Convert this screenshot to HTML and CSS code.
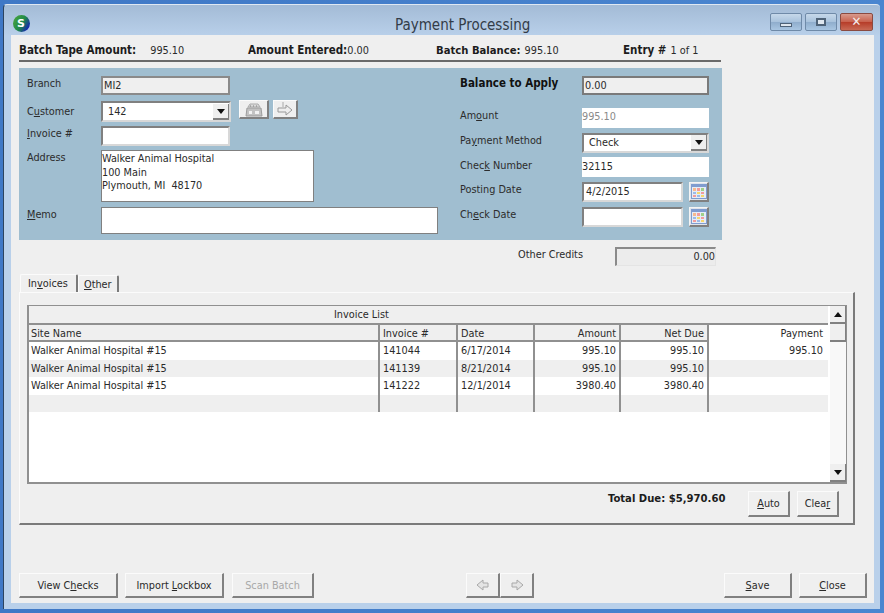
FILE: index.html
```html
<!DOCTYPE html>
<html lang="en">
<head>
<meta charset="utf-8">
<title>Payment Processing</title>
<link rel="stylesheet" href="styles.css">
</head>
<body>
<div class="window">
  <header class="titlebar">
    <svg class="logo" width="17" height="17" viewBox="0 0 17 17">
      <defs><linearGradient id="lg" x1="0" y1="0" x2="1" y2="0.6"><stop offset="0" stop-color="#4fa83c"/><stop offset=".6" stop-color="#1f8a4a"/><stop offset="1" stop-color="#1626b0"/></linearGradient></defs>
      <circle cx="8.5" cy="8.5" r="8.5" fill="url(#lg)"/>
      <text x="8" y="12" text-anchor="middle" class="logo-s">S</text>
    </svg>
    <div class="title">Payment Processing</div>
    <div class="winbtns">
      <div class="winbtn"><span class="min-glyph"></span></div>
      <div class="winbtn"><span class="max-glyph"></span></div>
      <div class="winbtn close"><span class="close-glyph">✕</span></div>
    </div>
  </header>
  <main class="client">
    <div class="infobar">
      <div class="info i1"><b>Batch Tape Amount:</b><span class="v1">995.10</span></div>
      <div class="info i2"><b>Amount Entered:</b><span>0.00</span></div>
      <div class="info i3"><b class="b3">Batch Balance:</b><span class="v3">995.10</span></div>
      <div class="info i4"><b>Entry #</b><span class="v3">1 of 1</span></div>
    </div>
    <section class="panel">
      <div class="col-left">
        <label class="lbl">Branch</label>
        <div class="inset ro w129">MI2</div>
        <label class="lbl nudge3">C<u>u</u>stomer</label>
        <div class="cust-row">
          <div class="inset sel w130"><span class="seltext">142</span><span class="drop"></span></div>
          <button class="btn ico ico1">
            <svg width="20" height="15" viewBox="0 0 20 15"><path d="M3 6h14l1 8H2z" fill="#c2c2c2" stroke="#9c9c9c"/><path d="M4 5l2-3h8l2 3z" fill="#dcdcdc" stroke="#aaa"/><path d="M6 4h1M9 4h1M12 4h1" stroke="#808080"/><path d="M5 9h3v3H5zM11 9h4v3h-4z" fill="#f2f2f2"/></svg>
          </button>
          <button class="btn ico ico2">
            <svg width="18" height="15" viewBox="0 0 18 15"><path d="M2 6h8V3l6 5-6 5v-3H2z" fill="#eee" stroke="#999"/><path d="M7 0v5" stroke="#aaa"/></svg>
          </button>
        </div>
        <label class="lbl"><u>I</u>nvoice #</label>
        <div class="inset w129"></div>
        <label class="lbl">Address</label>
        <div class="inset addr">Walker Animal Hospital<br>100 Main<br>Plymouth, MI&nbsp; 48170</div>
        <label class="lbl"><u>M</u>emo</label>
        <div class="inset memo"></div>
      </div>
      <div class="col-right">
        <label class="lbl strong">Balance to Apply</label>
        <div class="inset ro dark">0.00</div>
        <label class="lbl">Am<u>o</u>unt</label>
        <div class="flat muted">995.10</div>
        <label class="lbl">Pa<u>y</u>ment Method</label>
        <div class="inset sel"><span class="seltext">Check</span><span class="drop"></span></div>
        <label class="lbl nudge1">Chec<u>k</u> Number</label>
        <div class="flat nudge1">32115</div>
        <label class="lbl">Posting Date</label>
        <div class="date-row"><div class="inset date">4/2/2015</div><button class="calbtn"><svg width="16" height="15" viewBox="0 0 16 15"><rect width="16" height="15" fill="#7f9ccf"/><rect x="1" y="3" width="14" height="11" fill="#e6ecf6"/><rect x="2" y="4" width="3" height="3" fill="#f6b98e"/><rect x="6" y="4" width="3" height="3" fill="#f29c9c"/><rect x="10" y="4" width="3" height="3" fill="#9fd08a"/><rect x="2" y="8" width="3" height="2" fill="#9cbbe8"/><rect x="6" y="8" width="3" height="2" fill="#f5d76e"/><rect x="10" y="8" width="3" height="2" fill="#f29c9c"/><rect x="2" y="11" width="3" height="2" fill="#f29c9c"/><rect x="6" y="11" width="3" height="2" fill="#9cbbe8"/><rect x="10" y="11" width="3" height="2" fill="#f5d76e"/></svg></button></div>
        <label class="lbl">Ch<u>e</u>ck Date</label>
        <div class="date-row"><div class="inset date"></div><button class="calbtn"><svg width="16" height="15" viewBox="0 0 16 15"><rect width="16" height="15" fill="#7f9ccf"/><rect x="1" y="3" width="14" height="11" fill="#e6ecf6"/><rect x="2" y="4" width="3" height="3" fill="#f6b98e"/><rect x="6" y="4" width="3" height="3" fill="#f29c9c"/><rect x="10" y="4" width="3" height="3" fill="#9fd08a"/><rect x="2" y="8" width="3" height="2" fill="#9cbbe8"/><rect x="6" y="8" width="3" height="2" fill="#f5d76e"/><rect x="10" y="8" width="3" height="2" fill="#f29c9c"/><rect x="2" y="11" width="3" height="2" fill="#f29c9c"/><rect x="6" y="11" width="3" height="2" fill="#9cbbe8"/><rect x="10" y="11" width="3" height="2" fill="#f5d76e"/></svg></button></div>
      </div>
    </section>
    <div class="credits">
      <span class="credits-label">Other Credits</span>
      <div class="credits-box">0.00</div>
    </div>
    <div class="tabs">
      <div class="tab active">In<u>v</u>oices</div>
      <div class="tab"><u>O</u>ther</div>
    </div>
    <section class="tabpanel">
      <div class="grid">
        <div class="grid-main">
          <div class="grid-title">Invoice List</div>
          <div class="gr head">
            <div>Site Name</div><div>Invoice #</div><div>Date</div><div class="r">Amount</div><div class="r">Net Due</div><div class="r payhead">Payment</div>
          </div>
          <div class="gr">
            <div>Walker Animal Hospital #15</div><div>141044</div><div>6/17/2014</div><div class="r">995.10</div><div class="r">995.10</div><div class="r">995.10</div>
          </div>
          <div class="gr alt">
            <div>Walker Animal Hospital #15</div><div>141139</div><div>8/21/2014</div><div class="r">995.10</div><div class="r">995.10</div><div class="r"></div>
          </div>
          <div class="gr">
            <div>Walker Animal Hospital #15</div><div>141222</div><div>12/1/2014</div><div class="r">3980.40</div><div class="r">3980.40</div><div class="r"></div>
          </div>
          <div class="gr alt">
            <div></div><div></div><div></div><div></div><div></div><div></div>
          </div>
        </div>
        <div class="scroll">
          <div class="sb-btn"><span class="tri up"></span></div>
          <div class="sb-thumb"></div>
          <div class="sb-track"></div>
          <div class="sb-btn"><span class="drop-tri"></span></div>
        </div>
      </div>
      <div class="totals">
        <b class="total">Total Due: $5,970.60</b>
        <button class="btn small"><u>A</u>uto</button>
        <button class="btn small">Clea<u>r</u></button>
      </div>
    </section>
    <footer class="footer">
      <button class="btn b99">View C<u>h</u>ecks</button>
      <button class="btn b99">Import <u>L</u>ockbox</button>
      <button class="btn b82 disabled">Scan Batch</button>
      <div class="nav">
        <button class="btn navb"><svg width="14" height="12" viewBox="0 0 14 12"><path d="M12 4H7V1L1 6l6 5V8h5z" fill="#e4e4e4" stroke="#a8a8a8"/></svg></button>
        <button class="btn navb"><svg width="14" height="12" viewBox="0 0 14 12"><path d="M2 4h5V1l6 5-6 5V8H2z" fill="#e4e4e4" stroke="#a8a8a8"/></svg></button>
      </div>
      <button class="btn b68"><u>S</u>ave</button>
      <button class="btn b68 last"><u>C</u>lose</button>
    </footer>
  </main>
</div>
</body>
</html>
```
FILE: styles.css
```css
* { box-sizing: border-box; }
html, body { margin: 0; height: 100%; }
body {
  width: 884px; height: 613px; overflow: hidden;
  background: linear-gradient(90deg, #3f78c6 0, #4a86d0 100%);
  font-family: "DejaVu Sans", sans-serif;
  font-stretch: condensed;
  font-size: 10.8px;
  color: #2a2a2a;
  padding: 4px 4px 4px 3px;
}
u { text-decoration-thickness: 1px; text-underline-offset: 1px; }
button { font: inherit; color: inherit; padding: 0; }

.window {
  height: 605px;
  display: flex; flex-direction: column;
  border-left: 1px solid #2d4460;
  border-top: 1px solid #dfe8f2;
  border-radius: 4px 4px 0 0;
  background: linear-gradient(180deg, #a3bbd6 0, #b9d0ea 31px, #b9d0ea 100%);
}
.titlebar { height: 30px; display: flex; align-items: flex-start; padding: 10px 7px 0 9px; flex: none; }
.logo { flex: none; }
.logo-s { font: bold 11px "DejaVu Sans", sans-serif; fill: #fff; }
.title { margin-left: 365px; font-size: 15px; line-height: 20px; color: #333c48; white-space: nowrap; font-stretch: condensed; }
.winbtns { margin-left: auto; margin-top: -2px; display: flex; gap: 3px; }
.winbtn {
  width: 32px; height: 18px; border: 1px solid #6f8aa8; border-radius: 2px;
  background: linear-gradient(180deg, #c6d8ea 0, #a8c2dc 50%, #8fadcc 51%, #a9c6e2 100%);
  display: flex; align-items: center; justify-content: center;
}
.winbtn.close { width: 33px; background: linear-gradient(180deg, #d89a8c 0, #c8604c 50%, #b63c28 51%, #c86a55 100%); border-color: #8a4a40; }
.min-glyph { width: 12px; height: 4px; margin-top: 5px; background: #dfe7ef; border: 1px solid #4f6378; }
.max-glyph { width: 10px; height: 8px; background: #dfe7ef; border: 2px solid #4f6378; }
.close-glyph { color: #f4efee; font-size: 13px; font-weight: bold; line-height: 14px; }

.client {
  flex: 1; margin: 0 6px 6px 7px;
  background: #efefef;
  display: flex; flex-direction: column;
  padding: 8px 7px 5px 8px;
}

.infobar {
  width: 702px; height: 19px; flex: none;
  border-bottom: 2px solid #6a6a6a;
  display: flex; line-height: 15px;
}
.infobar b { color: #1c1c1c; font-weight: bold; font-size: 11.5px; }
.infobar .b3 { font-size: 11.2px; }
.info { white-space: nowrap; }
.i1 { width: 229px; }
.i2 { width: 188px; }
.i3 { width: 187px; }
.v1 { margin-left: 14px; }
.v3 { margin-left: 4px; }

.panel {
  margin-top: 6px; width: 703px; height: 172px; flex: none;
  background: #a0bed0;
  display: flex;
  padding: 8px 0 0 8px;
}
.col-left {
  width: 433px; display: grid;
  grid-template-columns: 74px 1fr;
  grid-template-rows: 25px 25px 24px 57px 27px;
  align-items: start;
}
.col-right {
  display: grid;
  grid-template-columns: 122px 127px;
  grid-template-rows: 32px 25px 24px 25px 25px 20px;
  align-items: start;
}
.lbl { line-height: 15px; color: #2c2c2c; display: block; }
.nudge3 { padding-top: 3px; }
.nudge1 { padding-top: 1px; }
.strong { font-weight: bold; color: #111; font-size: 11.5px; }

.inset {
  height: 20px; background: #fff;
  border: 2px solid; border-color: #808080 #d8d8d8 #d8d8d8 #808080;
  line-height: 16px; padding-left: 1px; white-space: nowrap;
}
.ro { background: #efefef; border-color: #8a8a8a; height: 19px; }
.dark { border-color: #7a7a7a; }
.w129 { width: 129px; }
.w130 { width: 130px; }
.sel { display: flex; align-items: center; justify-content: space-between; padding-right: 0; }
.seltext { padding-left: 4px; }
.drop {
  width: 16px; height: 16px; flex: none; background: #efefef;
  border-right: 1px solid #808080; border-bottom: 2px solid #808080;
  position: relative;
}
.drop::after {
  content: ""; position: absolute; left: 4px; top: 5px;
  border: 4px solid transparent; border-top: 5px solid #111; border-bottom: 0;
}
.cust-row { display: flex; align-items: flex-start; }
.cust-row .inset { height: 21px; }
.ico { margin-left: 8px; width: 30px; height: 19px; display: flex; align-items: center; justify-content: center; margin-top: -1px; }
.ico2 { margin-left: 4px; width: 25px; }
.addr { width: 213px; height: 52px; border-width: 1px; border-color: #808080; line-height: 13.5px; padding: 1px 0 0 0; }
.memo { width: 337px; height: 27px; border-width: 1px; border-color: #808080; }
.flat { height: 20px; background: #fff; line-height: 17px; white-space: nowrap; }
.flat.nudge1 { padding-top: 1px; }
.muted { color: #8a8a8a; }
.date-row { display: flex; gap: 6px; }
.date { width: 101px; padding-left: 2px; }
.calbtn {
  width: 20px; height: 20px; background: #dfe4ec;
  border: 1px solid; border-color: #f4f4f4 #808080 #808080 #f4f4f4;
  border-width: 1px 2px 2px 1px; display: flex; align-items: center; justify-content: center;
}

.credits { margin-top: 7px; height: 20px; flex: none; display: flex; width: 697px; justify-content: flex-end; }
.credits-label { margin-right: 32px; line-height: 15px; }
.credits-box {
  width: 101px; height: 19px; background: #ececec;
  border: 1px solid; border-color: #8a8a8a #e4e4e4 #e4e4e4 #8a8a8a;
  border-left-width: 2px; border-top-width: 2px;
  text-align: right; line-height: 16px; padding-right: 0;
}

.tabs { margin-top: 7px; height: 18px; flex: none; display: flex; align-items: flex-end; padding-left: 1px; }
.tab {
  height: 17px; padding: 0 5px 0 5px; line-height: 17px;
  border-top: 1px solid #fbfbfb; border-left: 1px solid #fbfbfb;
  border-right: 2px solid #7a7a7a; border-radius: 2px 2px 0 0;
}
.tab.active { height: 18px; width: 58px; padding-left: 7px; background: #efefef; line-height: 18px; }

.tabpanel {
  width: 836px; height: 233px; flex: none;
  border-top: 1px solid #fbfbfb; border-left: 1px solid #fbfbfb;
  border-right: 2px solid #7a7a7a; border-bottom: 2px solid #7a7a7a;
  padding: 12px 6px 0 7px;
}
.grid {
  width: 820px; height: 179px; background: #fff;
  border: 1px solid #909090; border-left-width: 2px; border-bottom-width: 2px;
  display: flex;
}
.grid-main { width: 799px; flex: none; }
.grid-title { height: 17px; background: #efefef; line-height: 18px; padding-left: 305px; }
.gr {
  display: grid; height: 17.5px;
  grid-template-columns: 351px 78px 77px 86px 88px 119px;
  line-height: 17px;
}
.gr > div { padding: 0 3px 0 3px; border-right: 2px solid #909090; white-space: nowrap; }
.gr > div:first-child { padding-left: 2px; }
.gr > div:last-child { border-right: 0; }
.gr .r { text-align: right; padding-right: 3px; }
.gr > div:last-child.r { padding-right: 5px; }
.head { height: 19px; background: #efefef; border-top: 2px solid #909090; border-bottom: 2px solid #909090; line-height: 17px; }
.payhead { background: #fff; }
.alt { background: #efefef; }
.scroll { flex: 1; display: flex; flex-direction: column; padding-left: 2px; min-width: 0; background: #fff; }
.sb-btn, .sb-thumb {
  background: #efefef; height: 18px;
  border-right: 1px solid #808080; border-bottom: 2px solid #808080;
  display: flex; align-items: center; justify-content: center; flex: none;
}
.sb-thumb { height: 18px; }
.sb-track { flex: 1; background: #f8f8f8; }
.tri.up { border: 4px solid transparent; border-bottom: 5px solid #111; border-top: 0; }
.drop-tri { border: 4px solid transparent; border-top: 5px solid #111; border-bottom: 0; }

.totals { display: flex; align-items: flex-start; margin-top: 7px; width: 812px; }
.total { margin-left: 581px; color: #1c1c1c; line-height: 15px; white-space: nowrap; font-size: 11.2px; }
.btn {
  background: #efefef;
  border: 1px solid; border-color: #fbfbfb #808080 #808080 #fbfbfb;
  border-width: 1px 2px 2px 1px;
  text-align: center;
}
.small { width: 42px; height: 26px; flex: none; }
.total + .small { margin-left: auto; }
.small + .small { margin-left: 7px; }

.footer { margin-top: auto; display: flex; height: 25px; flex: none; align-items: stretch; }
.b99 { width: 99px; margin-right: 7px; }
.b99 + .b82 { margin-left: 1px; }
.b82 { width: 82px; }
.disabled { color: #a8a8a8; }
.nav { margin-left: 152px; display: flex; }
.navb { width: 34px; display: flex; align-items: center; justify-content: center; }
.b68 { width: 68px; }
.nav + .b68 { margin-left: auto; }
.last { margin-left: 7px; }
```
